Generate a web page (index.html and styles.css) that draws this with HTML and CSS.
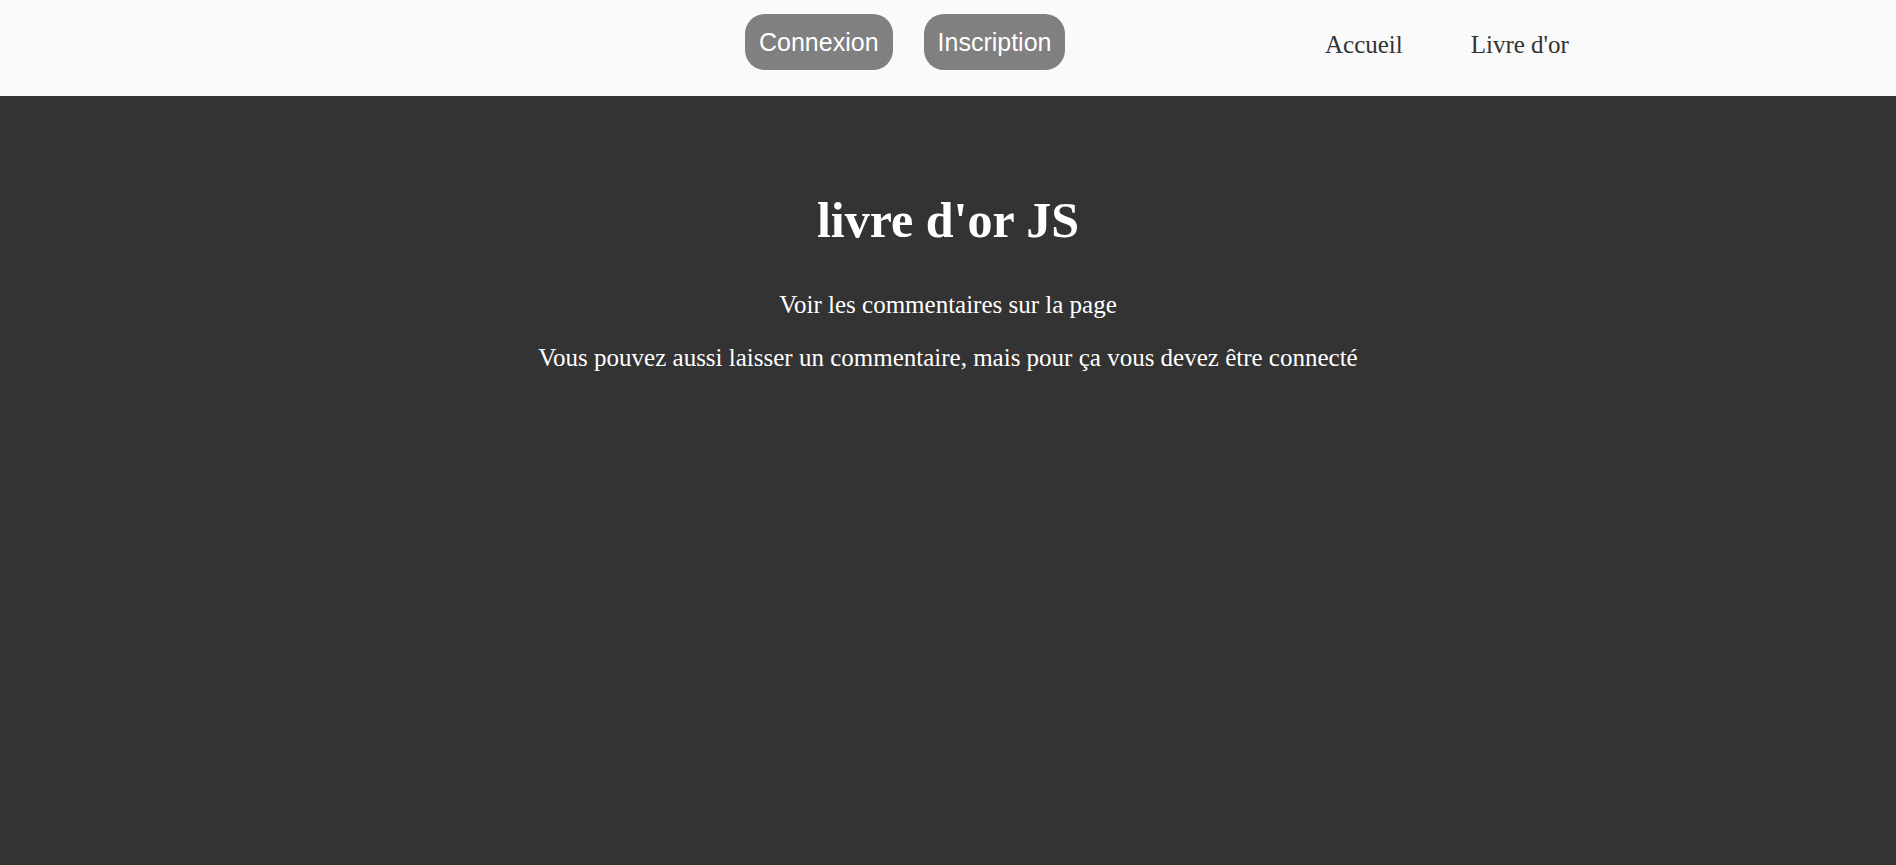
FILE: index.html
```html
<!DOCTYPE html>
<html lang="fr">
<head>
<meta charset="utf-8">
<title>livre d'or JS</title>
<link rel="stylesheet" href="styles.css">
</head>
<body>
<header class="topbar">
  <div class="auth">
    <button class="btn">Connexion</button>
    <button class="btn">Inscription</button>
  </div>
  <nav class="nav">
    <a class="nav-link" href="#">Accueil</a>
    <a class="nav-link" href="#">Livre d'or</a>
  </nav>
</header>
<main class="content">
  <h1 class="title">livre d'or JS</h1>
  <p class="text">Voir les commentaires sur la page</p>
  <p class="text">Vous pouvez aussi laisser un commentaire, mais pour ça vous devez être connecté</p>
</main>
</body>
</html>
```
FILE: styles.css
```css
html, body {
  margin: 0;
  padding: 0;
}
body {
  font-family: "Liberation Serif", "Times New Roman", serif;
  font-size: 25px;
  background: #333333;
  color: #ffffff;
  min-height: 100vh;
}
.topbar {
  display: flex;
  align-items: flex-start;
  height: 96px;
  box-sizing: border-box;
  padding-left: 745px;
  background: #fafafa;
}
.auth {
  display: flex;
  gap: 31px;
  margin-top: 14px;
}
.btn {
  font-family: "Liberation Sans", Arial, sans-serif;
  font-size: 25px;
  line-height: normal;
  color: #ffffff;
  background: #808080;
  border: none;
  border-radius: 20px;
  padding: 13.6px 14px;
  margin: 0;
  cursor: pointer;
}
.nav {
  display: flex;
  gap: 68px;
  margin-left: 259.5px;
  margin-top: 31.2px;
}
.nav-link {
  color: #333333;
  text-decoration: none;
}
.content {
  text-align: center;
  padding-top: 62px;
}
.title {
  font-size: 50px;
  font-weight: bold;
  margin: 33px 0 42px;
}
.text {
  margin: 25px 0;
}
```
